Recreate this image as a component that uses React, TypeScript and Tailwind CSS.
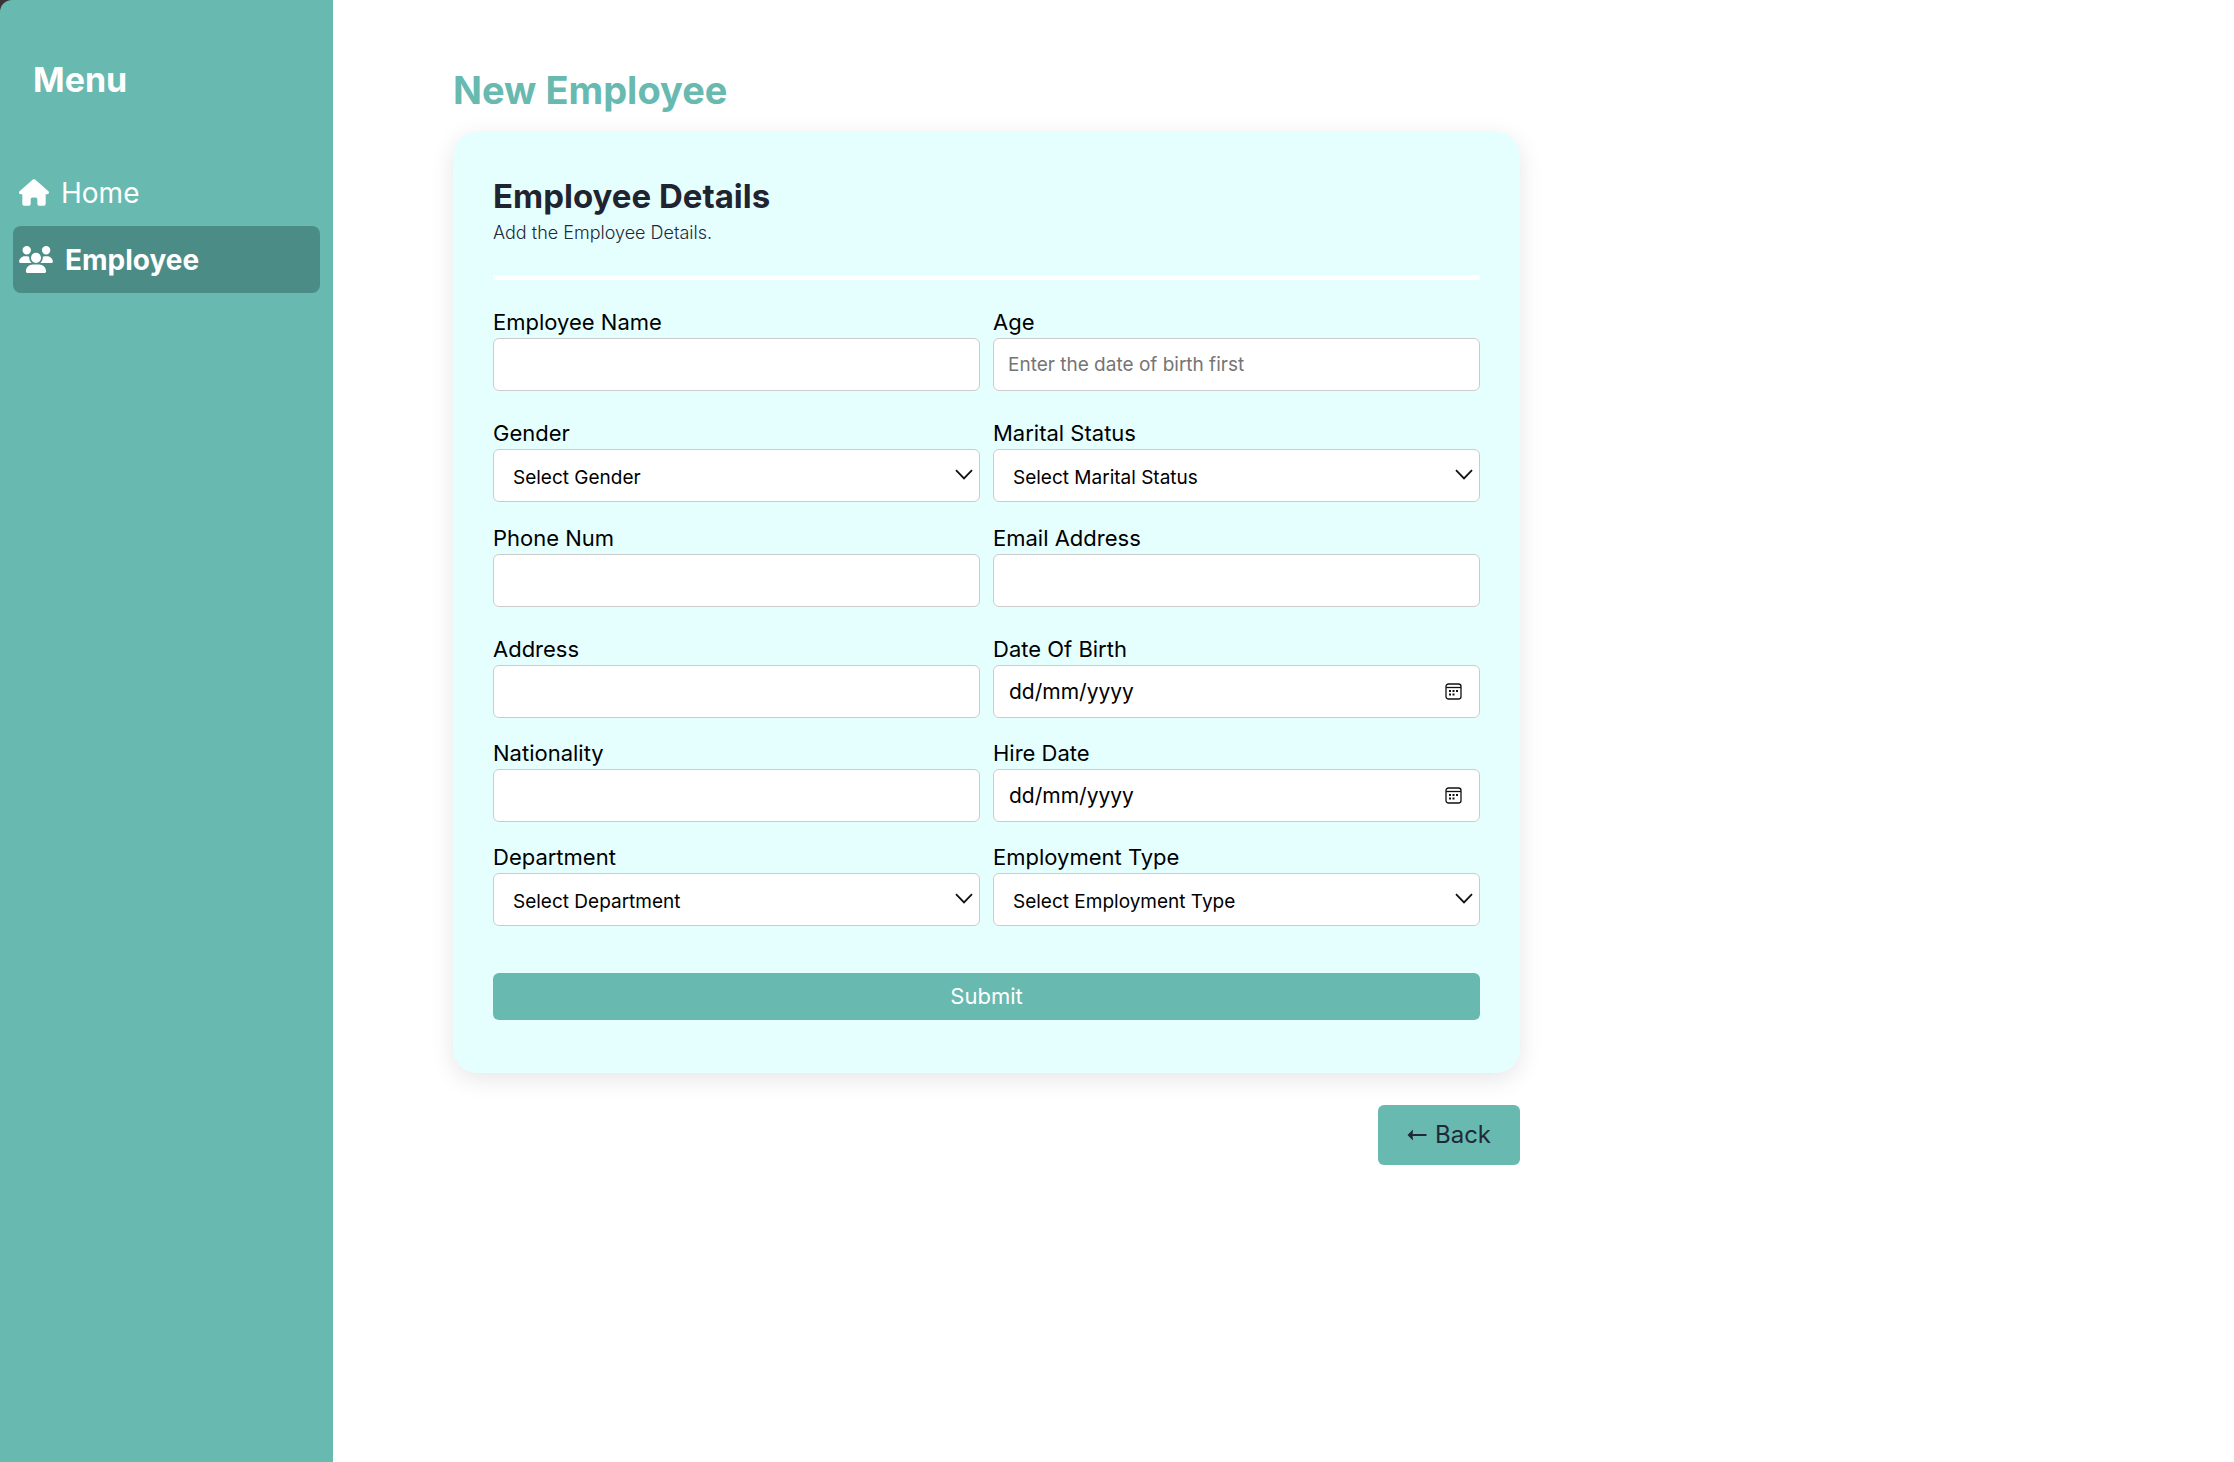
import { useState } from "react";
import type { ReactNode } from "react";
import { FaHouse, FaUsers } from "react-icons/fa6";

const control =
  "h-[53px] w-full rounded-md border border-[#cccccc] bg-white text-black outline-none focus:border-[#68b9b0]";

function Field({ id, label, children }: { id: string; label: string; children: ReactNode }) {
  return (
    <div className="min-w-0">
      <label htmlFor={id} className="block text-[22px] leading-8 text-black">
        {label}
      </label>
      {children}
    </div>
  );
}

function TextField({
  id,
  label,
  type = "text",
  placeholder,
}: {
  id: string;
  label: string;
  type?: string;
  placeholder?: string;
}) {
  return (
    <Field id={id} label={label}>
      <input
        id={id}
        type={type}
        placeholder={placeholder}
        className={`${control} px-3.5 text-[19px] placeholder:text-[#757575]`}
      />
    </Field>
  );
}

function SelectField({
  id,
  label,
  placeholder,
  options,
}: {
  id: string;
  label: string;
  placeholder: string;
  options: string[];
}) {
  return (
    <Field id={id} label={label}>
      <div className="relative">
        <select id={id} defaultValue="" className={`${control} appearance-none px-[19px] pt-1.5 text-[19px]`}>
          <option value="">{placeholder}</option>
          {options.map((option) => (
            <option key={option}>{option}</option>
          ))}
        </select>
        <svg
          viewBox="0 0 18 11"
          className="pointer-events-none absolute top-5 right-[7px] h-[11px] w-[18px]"
          fill="none"
          stroke="#111111"
          strokeWidth="1.8"
          aria-hidden="true"
        >
          <path d="M1 1.2 9 9.4 17 1.2" />
        </svg>
      </div>
    </Field>
  );
}

function DateField({ id, label }: { id: string; label: string }) {
  const [value, setValue] = useState("");
  return (
    <Field id={id} label={label}>
      <div className="relative">
        <input
          id={id}
          type="text"
          inputMode="numeric"
          placeholder="dd/mm/yyyy"
          value={value}
          onChange={(event) => setValue(event.target.value)}
          className={`${control} px-[15px] text-[21px] placeholder:text-black`}
        />
        <button
          type="button"
          aria-label={`Pick ${label}`}
          className="absolute top-[18px] right-[18px] h-[17px] w-[17px]"
        >
          <svg viewBox="0 0 17 17" className="h-[17px] w-[17px]" fill="none" aria-hidden="true">
            <rect x="1" y="1" width="15" height="15" rx="2.5" stroke="#111111" strokeWidth="1.3" />
            <path d="M1 4.5H16" stroke="#111111" strokeWidth="1.3" />
            <g fill="#111111">
              <rect x="4" y="7" width="2" height="2" />
              <rect x="7.5" y="7" width="2" height="2" />
              <rect x="11" y="7" width="2" height="2" />
              <rect x="4" y="10.5" width="2" height="2" />
              <rect x="7.5" y="10.5" width="2" height="2" />
            </g>
          </svg>
        </button>
      </div>
    </Field>
  );
}

function Row({ children }: { children: ReactNode }) {
  return <div className="grid grid-cols-2 gap-[13px]">{children}</div>;
}

export default function App() {
  return (
    <div className="flex min-h-screen bg-[#3a3436] font-['Inter',sans-serif]">
      <aside className="w-[333px] shrink-0 rounded-tl-xl bg-[#68b9b0] text-white">
        <h2 className="px-[33px] pt-14 text-[34px] leading-[48px] font-bold">Menu</h2>
        <nav className="mt-[55px] px-[13px]">
          <a href="#home" className="flex h-[67px] items-center gap-3 px-1.5 text-[28px]">
            <FaHouse className="h-[27px] w-[30px]" />
            Home
          </a>
          <a
            href="#employee"
            className="flex h-[67px] items-center gap-3 rounded-lg bg-[#4b8c87] px-1.5 text-[28px] font-bold"
          >
            <FaUsers className="h-[27px] w-[34px]" />
            Employee
          </a>
        </nav>
      </aside>

      <main className="flex-1 bg-white pt-[62px] pl-[120px]">
        <div className="w-full max-w-[1067px]">
          <h1 className="text-[38px] leading-[56px] font-bold text-[#68b9b0]">New Employee</h1>

          <section className="mt-3.5 rounded-3xl bg-[#e5ffff] px-10 pt-[41px] pb-[53px] shadow-[0_6px_24px_rgba(0,0,0,0.1)]">
            <h2 className="text-[33px] leading-[46px] font-bold text-[#1f2430]">Employee Details</h2>
            <p className="text-[18px] leading-7 font-light text-[#1f2937]">Add the Employee Details.</p>
            <hr className="mt-7 border-0 border-t-[5px] border-white" />

            <form className="mt-[26px]" onSubmit={(event) => event.preventDefault()}>
              <Row>
                <TextField id="name" label="Employee Name" />
                <TextField id="age" label="Age" placeholder="Enter the date of birth first" />
              </Row>
              <div className="mt-[26px] flex flex-col gap-5">
                <Row>
                  <SelectField
                    id="gender"
                    label="Gender"
                    placeholder="Select Gender"
                    options={["Female", "Male", "Other"]}
                  />
                  <SelectField
                    id="marital"
                    label="Marital Status"
                    placeholder="Select Marital Status"
                    options={["Single", "Married", "Divorced", "Widowed"]}
                  />
                </Row>
                <Row>
                  <TextField id="phone" label="Phone Num" type="tel" />
                  <TextField id="email" label="Email Address" type="email" />
                </Row>
              </div>
              <div className="mt-[26px] flex flex-col gap-[19px]">
                <Row>
                  <TextField id="address" label="Address" />
                  <DateField id="dob" label="Date Of Birth" />
                </Row>
                <Row>
                  <TextField id="nationality" label="Nationality" />
                  <DateField id="hire" label="Hire Date" />
                </Row>
                <Row>
                  <SelectField
                    id="department"
                    label="Department"
                    placeholder="Select Department"
                    options={["Engineering", "Finance", "Human Resources", "Sales"]}
                  />
                  <SelectField
                    id="employment"
                    label="Employment Type"
                    placeholder="Select Employment Type"
                    options={["Full Time", "Part Time", "Contract"]}
                  />
                </Row>
              </div>
              <button
                type="submit"
                className="mt-[47px] h-[47px] w-full rounded-md bg-[#68b9b0] text-[22px] text-white"
              >
                Submit
              </button>
            </form>
          </section>

          <div className="mt-8 flex justify-end">
            <button
              type="button"
              className="flex h-[60px] w-[142px] items-center justify-center gap-2 rounded-md bg-[#68b9b0] text-[24px] text-[#1f2937]"
            >
              <svg viewBox="0 0 20 14" className="h-3.5 w-5" aria-hidden="true">
                <path d="M4 7H19.5" stroke="currentColor" strokeWidth="2" fill="none" />
                <path d="M0.5 7 6 1.5Q5 7 6 12.5Z" fill="currentColor" />
              </svg>
              Back
            </button>
          </div>
        </div>
      </main>
    </div>
  );
}
